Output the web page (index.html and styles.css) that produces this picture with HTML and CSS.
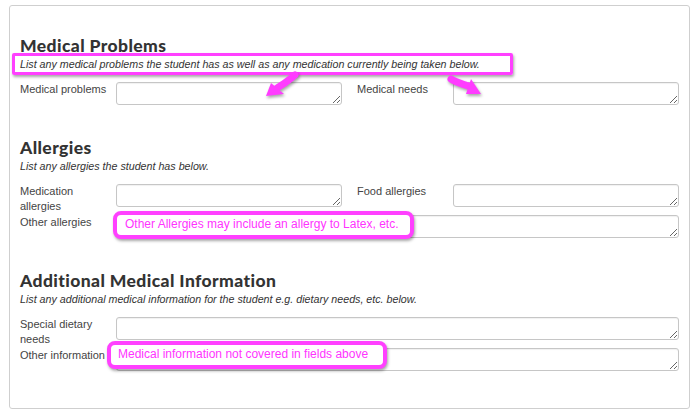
FILE: index.html
```html
<!DOCTYPE html>
<html>
<head>
<meta charset="utf-8">
<link rel="stylesheet" href="styles.css">
</head>
<body>
<div class="panel">
  <section class="section">
    <h3 class="title">Medical Problems</h3>
    <p class="desc">List any medical problems the student has as well as any medication currently being taken below.</p>
    <div class="row">
      <div class="field"><label class="label">Medical problems</label><textarea class="input"></textarea></div>
      <div class="field"><label class="label">Medical needs</label><textarea class="input"></textarea></div>
    </div>
  </section>
  <section class="section">
    <h3 class="title">Allergies</h3>
    <p class="desc">List any allergies the student has below.</p>
    <div class="row">
      <div class="field"><label class="label">Medication allergies</label><textarea class="input"></textarea></div>
      <div class="field"><label class="label">Food allergies</label><textarea class="input"></textarea></div>
    </div>
    <div class="row">
      <div class="field"><label class="label">Other allergies</label><textarea class="input"></textarea></div>
    </div>
  </section>
  <section class="section">
    <h3 class="title">Additional Medical Information</h3>
    <p class="desc">List any additional medical information for the student e.g. dietary needs, etc. below.</p>
    <div class="row">
      <div class="field"><label class="label">Special dietary needs</label><textarea class="input"></textarea></div>
    </div>
    <div class="row">
      <div class="field"><label class="label">Other information</label><textarea class="input"></textarea></div>
    </div>
  </section>

  <div class="note note-desc"></div>
  <svg class="arrow arrow-1" width="40" height="32" viewBox="0 0 40 32">
    <path d="M33 4 C28 8 24 12 15 17" fill="none" stroke="#ff3cff" stroke-width="7" stroke-linecap="round"/>
    <polygon points="4,25 9,12 22,23" fill="#ff3cff"/>
  </svg>
  <svg class="arrow arrow-2" width="40" height="30" viewBox="0 0 40 30">
    <path d="M4 5 C10 9 16 10 24 13" fill="none" stroke="#ff3cff" stroke-width="7" stroke-linecap="round"/>
    <polygon points="34,20 24,5 19,20" fill="#ff3cff"/>
  </svg>
  <div class="note note-box note-allergy">Other Allergies may include an allergy to Latex, etc.</div>
  <div class="note note-box note-info">Medical information not covered in fields above</div>
</div>
</body>
</html>
```
FILE: styles.css
```css
html, body {
  margin: 0;
  padding: 0;
  background: #fff;
}
body {
  font-family: "Liberation Sans", Arial, sans-serif;
  color: #3b3b3b;
}
.panel {
  position: relative;
  box-sizing: border-box;
  width: 681px;
  margin: 5px 0 0 9px;
  padding: 30px 10px 37px 10px;
  border: 1px solid #cfcfcf;
  border-radius: 3px;
}
.section + .section {
  margin-top: 33px;
}
.title {
  margin: 0;
  font-family: Lato, "Open Sans", sans-serif;
  font-weight: 900;
  font-size: 17.5px;
  letter-spacing: 0.4px;
  line-height: 20px;
  color: #333;
}
.desc {
  margin: 1px 0 11px 0;
  font-style: italic;
  font-size: 10.7px;
  line-height: 14px;
  color: #333;
}
.row {
  display: flex;
  gap: 15px;
}
.row + .row {
  margin-top: 1px;
}
.field {
  flex: 1;
  display: flex;
  align-items: flex-start;
}
.label {
  flex: 0 0 96px;
  font-size: 11px;
  line-height: 15px;
  color: #444;
  padding-right: 2px;
  box-sizing: border-box;
}
.input {
  flex: 1;
  min-width: 0;
  box-sizing: border-box;
  height: 23px;
  margin: 0;
  border: 1px solid #c6c6c6;
  border-radius: 3px;
  box-shadow: inset 0 1px 1px rgba(0,0,0,0.06);
  background: #fff;
}
.note {
  position: absolute;
  box-sizing: border-box;
  border: 3px solid #ff40ff;
  box-shadow: 1px 2px 3px rgba(0,0,0,0.35);
}
.note-desc {
  left: 2px;
  top: 47px;
  width: 501px;
  height: 22px;
  border-radius: 2px;
}
.note-box {
  background: #fff;
  border-width: 4px;
  border-radius: 8px;
  color: #ff33ff;
  font-size: 12px;
  line-height: 15px;
  padding: 0 0 0 8px;
}
.note-allergy {
  left: 103px;
  top: 205px;
  width: 301px;
  height: 28px;
  padding-top: 2px;
}
.note-info {
  left: 97px;
  top: 335px;
  width: 280px;
  height: 28px;
  padding-top: 2px;
  padding-left: 7px;
}
.arrow {
  position: absolute;
  filter: drop-shadow(1px 2px 1.5px rgba(0,0,0,0.35));
}
.arrow-1 {
  left: 252px;
  top: 65px;
}
.arrow-2 {
  left: 437px;
  top: 68px;
}
```
